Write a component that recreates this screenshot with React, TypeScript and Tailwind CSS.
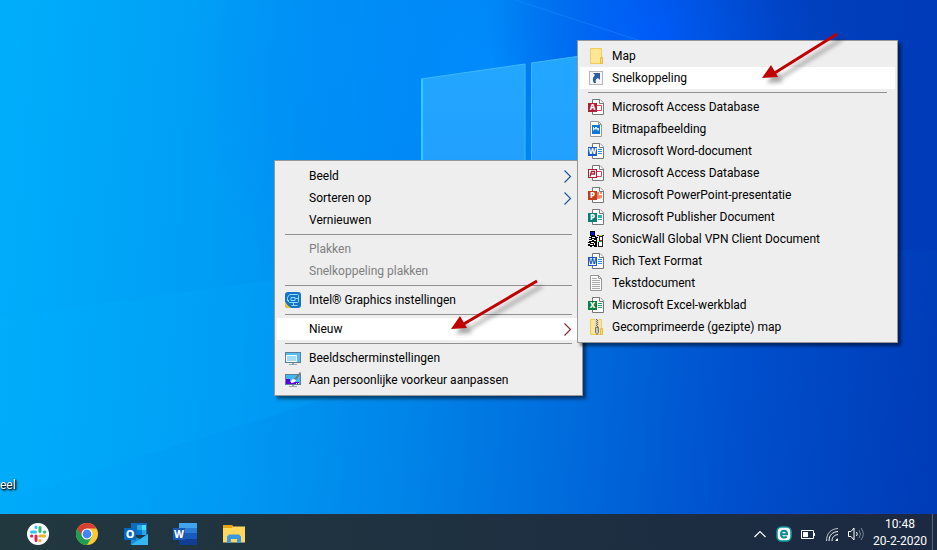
import React from "react";

interface MenuEntry {
  label: string;
  icon?: React.ReactNode;
  disabled?: boolean;
  active?: boolean;
  submenu?: boolean;
}

// Contour de page commun aux documents Office
const PageOutline = () => (
  <>
    <path d="M4.500 .5h7.500l3.500 3.500v11.500h-11z" fill="#fff" stroke="#777" />
    <path d="M11.500 .5v4h4" fill="#fff" stroke="#777" />
  </>
);

interface OfficeIconProps {
  letter?: string;
  color: string;
  outlined?: boolean;
  children?: React.ReactNode;
}

const OfficeIcon = ({ letter, color, outlined, children }: OfficeIconProps) => (
  <svg width="16" height="16" viewBox="0 0 16 16" aria-hidden="true">
    <PageOutline />
    {children}
    {outlined ? (
      <rect x="0.5" y="4.5" width="8" height="8" fill="#fff" stroke={color} />
    ) : (
      <rect x="0" y="4" width="9" height="9" fill={color} />
    )}
    {letter ? (
      <text
        x="4.5"
        y="11.300"
        textAnchor="middle"
        fontSize="8"
        fontWeight="800"
        fontFamily="Noto Sans, sans-serif"
        fill={outlined ? color : "#fff"}
      >
        {letter}
      </text>
    ) : (
      <path d="M2 11.500l1.500-5h3v2.500h-3" fill="none" stroke={color} strokeWidth="1.300" />
    )}
  </svg>
);

const DocLines = ({ color }: { color: string }) => (
  <path d="M10 6.500h4M10 8.500h4M10 10.500h4" stroke={color} fill="none" />
);

const FolderIcon = ({ zipped }: { zipped?: boolean }) => (
  <svg width="16" height="16" viewBox="0 0 16 16" aria-hidden="true">
    <path d="M2.500 .5h11v9h1v6h-12z" fill="#ffe695" stroke="#f0cd58" />
    <path d="M12.500 9.500h2v6h-2z" fill="#fbd86c" stroke="#e5bd45" />
    {zipped && (
      <>
        <path d="M7 0h4v10h-4z" fill="#d8d8d0" />
        <path d="M8.500 0v10" stroke="#666" strokeDasharray="1 1" />
        <path d="M9.500 1v10" stroke="#666" strokeDasharray="1 1" />
        <path d="M7.500 8.500h3v5l-1.500 2l-1.500-2z" fill="#c4c4c4" stroke="#777" />
      </>
    )}
  </svg>
);

const ShortcutIcon = () => (
  <svg width="16" height="16" viewBox="0 0 16 16" aria-hidden="true">
    <rect x="1.500" y="1.500" width="13" height="13" fill="#f7f7f7" stroke="#b5b5b5" />
    <path d="M5 3h7v7l-2-2c-2 1-3 2-2 5h-2c-2-3-1-6 1-8z" fill="#2c5d9e" />
  </svg>
);

const BitmapIcon = () => (
  <svg width="16" height="16" viewBox="0 0 16 16" aria-hidden="true">
    <path d="M2.500 .5h8l3 3v12h-11z" fill="#fff" stroke="#999" />
    <path d="M10.500 .5v3h3" fill="none" stroke="#999" />
    <rect x="4" y="4" width="8" height="9" fill="#0b78d8" />
    <path d="M5 6h6v3l-1 1l-1-2l-1 1l-1-1l-2 2z" fill="#d9eefc" />
    <path d="M6 6h1v1h-1zM9 6h2v1h-2z" fill="#0b78d8" />
  </svg>
);

const TextIcon = () => (
  <svg width="16" height="16" viewBox="0 0 16 16" aria-hidden="true">
    <path d="M2.500 .5h8l3 3v12h-11z" fill="#fafafa" stroke="#999" />
    <path d="M10.500 .5v3h3" fill="none" stroke="#999" />
    <path d="M4 3.500h5M4 5.500h8M4 7.500h8M4 9.500h8M4 11.500h8M4 13.500h8" stroke="#aaa" />
  </svg>
);

const SonicWallIcon = () => (
  <svg width="16" height="16" viewBox="0 0 16 16" shapeRendering="crispEdges" aria-hidden="true">
    <path d="M2 0h5v5h1v1h2v1h-1v9h-9v-5h1v-6h1z" fill="#000" />
    <path d="M3 1h3v3h-3z" fill="#0018e8" />
    <path d="M1 5h2v1h-2zM4 6h3v1h-3zM1 7h2v1h-2zM4 8h2v1h-2zM6 9h2v1h-2zM1 9h3v1h-3zM3 11h3v1h-3zM0 12h2v1h-2zM6 12h1v2h-1zM2 13h3v1h-3zM0 15h2v1h-2zM4 15h2v1h-2z" fill="#fff" />
    <path d="M9 4h7v1h-1v11h-5v-5h1v-6h-2z" fill="#222" />
    <path d="M12 6h2v3h-2zM11 11h3v4h-3z" fill="#fff" />
    <path d="M11 4h3v1h-3z" fill="#e8e000" />
    <path d="M11 10h3v1h-3z" fill="#00b030" />
    <path d="M12 9h2v1h-2z" fill="#e01010" />
  </svg>
);

const IntelIcon = () => (
  <svg width="16" height="16" viewBox="0 0 16 16" aria-hidden="true">
    <rect x="0" y="0" width="16" height="16" rx="3" fill="#1672c6" />
    <path d="M0 9.500q3 5 6.500 6.500h-3.500q-3 0-3-3z" fill="#f6c52c" />
    <path d="M4.500 2.500h8q1 0 1 1v6q0 1-1 1h-8l-2-2v-3zM6.500 13.500h6M6 5.500h4v3h-4zM2 8.500h2M10 6.500h3M8.500 11v2" fill="none" stroke="#8cdcff" />
  </svg>
);

const MonitorIcon = () => (
  <svg width="16" height="16" viewBox="0 0 16 16" aria-hidden="true">
    <rect x="0.500" y="2.500" width="15" height="10" fill="#53bdf4" stroke="#5c7f97" />
    <path d="M1.500 5.500h10v6h-10z" fill="#a6dcfb" stroke="#fff" />
    <path d="M7 13h2v1h3v1h-8v-1h3z" fill="#9aa7b0" />
  </svg>
);

const PersonalizeIcon = () => (
  <svg width="16" height="16" viewBox="0 0 16 16" aria-hidden="true">
    <rect x="0.500" y="2.500" width="15" height="10" fill="#45b6f5" stroke="#5c7f97" />
    <path d="M1 7h4v3h9v2h-13z" fill="#5a00e0" />
    <path d="M11 11h1v1h-1zM13 11h1v1h-1z" fill="#fff" />
    <path d="M6 11q0-4 3-4l2 1q-1 3-5 3z" fill="#fff" />
    <path d="M9 7l6-7l1 1l-5 7z" fill="#767676" />
    <path d="M7 13h2v1h3v1h-8v-1h3z" fill="#9aa7b0" />
  </svg>
);

const contextGroups: MenuEntry[][] = [
  [
    { label: "Beeld", submenu: true },
    { label: "Sorteren op", submenu: true },
    { label: "Vernieuwen" },
  ],
  [
    { label: "Plakken", disabled: true },
    { label: "Snelkoppeling plakken", disabled: true },
  ],
  [{ label: "Intel® Graphics instellingen", icon: <IntelIcon /> }],
  [{ label: "Nieuw", submenu: true, active: true }],
  [
    { label: "Beeldscherminstellingen", icon: <MonitorIcon /> },
    { label: "Aan persoonlijke voorkeur aanpassen", icon: <PersonalizeIcon /> },
  ],
];

const newGroups: MenuEntry[][] = [
  [
    { label: "Map", icon: <FolderIcon /> },
    { label: "Snelkoppeling", icon: <ShortcutIcon />, active: true },
  ],
  [
    {
      label: "Microsoft Access Database",
      icon: (
        <OfficeIcon letter="A" color="#b01f36">
          <path d="M9 6.500h4.500v5h-4.500" fill="none" stroke="#d8455a" />
        </OfficeIcon>
      ),
    },
    { label: "Bitmapafbeelding", icon: <BitmapIcon /> },
    {
      label: "Microsoft Word-document",
      icon: (
        <OfficeIcon letter="W" color="#185abd">
          <DocLines color="#2f8be0" />
        </OfficeIcon>
      ),
    },
    {
      label: "Microsoft Access Database",
      icon: (
        <OfficeIcon color="#b01f36" outlined>
          <path d="M9 6.500h4.500v5h-4.500" fill="none" stroke="#d8455a" />
        </OfficeIcon>
      ),
    },
    {
      label: "Microsoft PowerPoint-presentatie",
      icon: (
        <OfficeIcon letter="P" color="#c43e1c">
          <path d="M9 5h2v3h3v3q-2 1-5 1z" fill="#f58a68" />
          <path d="M12 5h2v2h-2z" fill="#f58a68" />
        </OfficeIcon>
      ),
    },
    {
      label: "Microsoft Publisher Document",
      icon: (
        <OfficeIcon letter="P" color="#0a7c78">
          <path d="M10 10.500h4" stroke="#2cb5b0" />
          <path d="M10 6h4v3h-4z" fill="#2cb5b0" />
        </OfficeIcon>
      ),
    },
    { label: "SonicWall Global VPN Client Document", icon: <SonicWallIcon /> },
    {
      label: "Rich Text Format",
      icon: (
        <OfficeIcon letter="W" color="#185abd" outlined>
          <DocLines color="#2f8be0" />
        </OfficeIcon>
      ),
    },
    { label: "Tekstdocument", icon: <TextIcon /> },
    {
      label: "Microsoft Excel-werkblad",
      icon: (
        <OfficeIcon letter="X" color="#107c41">
          <DocLines color="#21a366" />
        </OfficeIcon>
      ),
    },
    { label: "Gecomprimeerde (gezipte) map", icon: <FolderIcon zipped /> },
  ],
];

const MenuItem = ({ label, icon, disabled, active, submenu }: MenuEntry) => (
  <button
    type="button"
    role="menuitem"
    disabled={disabled}
    className={`flex h-[22px] w-full items-center gap-2 px-2 text-left text-black disabled:text-[#808080] ${
      active ? "bg-white" : ""
    }`}
  >
    <span className="h-4 w-4 shrink-0">{icon}</span>
    <span className="flex-1 whitespace-nowrap">{label}</span>
    {submenu && (
      <svg width="9" height="13" viewBox="0 0 9 13" aria-hidden="true">
        <path d="M1.500 .5l6 6l-6 6" fill="none" strokeWidth="1.200" stroke={active ? "#8c2a3a" : "#1b5a9c"} />
      </svg>
    )}
  </button>
);

const Menu = ({ groups, name, className }: { groups: MenuEntry[][]; name: string; className: string }) => (
  <div
    role="menu"
    aria-label={name}
    className={`absolute border border-[#979797] bg-[#eeeeee] px-0.5 py-1 shadow-[3px_3px_3px_rgba(0,0,0,0.5)] ${className}`}
  >
    {groups.map((group, index) => (
      <React.Fragment key={index}>
        {index > 0 && <hr className="mx-2 my-[3px] border-[#919191]" />}
        {group.map((entry, i) => (
          <MenuItem key={i} {...entry} />
        ))}
      </React.Fragment>
    ))}
  </div>
);

// Flèche rouge d'annotation, la pointe en bas à gauche
const RedArrow = ({ shaft, className }: { shaft: string; className: string }) => (
  <svg
    width="104"
    height="68"
    viewBox="0 0 104 68"
    className={`pointer-events-none absolute overflow-visible ${className}`}
    aria-hidden="true"
  >
    <g className="drop-shadow-[5px_5px_2px_rgba(0,0,0,0.35)]">
      <path d={shaft} stroke="#c00000" strokeWidth="3" fill="none" />
      <path d="M0 49l9-13l7 12z" fill="#c00000" />
    </g>
  </svg>
);

const Wallpaper = () => (
  <svg
    className="absolute inset-0 h-full w-full"
    viewBox="0 0 937 550"
    preserveAspectRatio="none"
    aria-hidden="true"
  >
    <defs>
      <linearGradient id="sky" gradientUnits="userSpaceOnUse" x1="0" y1="250" x2="937" y2="330">
        <stop offset="0" stopColor="#00adfb" />
        <stop offset="0.250" stopColor="#009bf4" />
        <stop offset="0.450" stopColor="#0084e8" />
        <stop offset="0.620" stopColor="#006bdc" />
        <stop offset="0.800" stopColor="#004fcc" />
        <stop offset="1" stopColor="#003cb8" />
      </linearGradient>
      <radialGradient id="glow" gradientUnits="userSpaceOnUse" cx="490" cy="70" r="300">
        <stop offset="0" stopColor="#008cff" stopOpacity="0.9" />
        <stop offset="0.500" stopColor="#008cff" stopOpacity="0.500" />
        <stop offset="1" stopColor="#0080ff" stopOpacity="0" />
      </radialGradient>
      <radialGradient id="halo" gradientUnits="userSpaceOnUse" cx="660" cy="30" r="170">
        <stop offset="0" stopColor="#005cff" stopOpacity="0.9" />
        <stop offset="0.400" stopColor="#0054f4" stopOpacity="0.600" />
        <stop offset="1" stopColor="#0048d8" stopOpacity="0" />
      </radialGradient>
      <linearGradient id="corner" gradientUnits="userSpaceOnUse" x1="640" y1="60" x2="830" y2="0">
        <stop offset="0" stopColor="#003cc4" stopOpacity="0" />
        <stop offset="1" stopColor="#003ab8" stopOpacity="0.7" />
      </linearGradient>
      <linearGradient id="pane" x1="0" y1="0" x2="0" y2="1">
        <stop offset="0" stopColor="#22a8ff" />
        <stop offset="1" stopColor="#229aff" />
      </linearGradient>
    </defs>
    <rect width="937" height="550" fill="url(#sky)" />
    <rect width="937" height="550" fill="url(#glow)" />
    <rect width="937" height="550" fill="url(#halo)" />
    <path d="M515 0h422v250h-100l-190-208z" fill="url(#corner)" />
    <path d="M0 317l421-57v110l-421 130z" fill="#00b8ff" opacity="0.150" />
    <path d="M515 0l135 44" stroke="#1c8cff" opacity="0.500" />
    <path d="M421 79l104-15v180h-104zM531 63l140-20v200h-140z" fill="url(#pane)" />
    <path d="M422 79v165" stroke="#35ccff" strokeWidth="2" />
    <path d="M421 79l104-15v180M531.500 244v-181l140-20" fill="none" stroke="#3fb8ff" />
  </svg>
);

const taskbarApps = [
  {
    name: "Slack",
    icon: (
      <svg width="24" height="24" viewBox="0 0 24 24" aria-hidden="true">
        <circle cx="12" cy="12" r="11" fill="#fff" />
        <g strokeWidth="3" strokeLinecap="round">
          <path d="M5.500 10h4M10 5v.5" stroke="#36c5f0" />
          <path d="M14 5.500v4M18.500 10h.3" stroke="#2eb67d" />
          <path d="M14 14h4.500M14 18.500v.3" stroke="#ecb22e" />
          <path d="M10 14v4.500M5.500 14h.3" stroke="#e01e5a" />
        </g>
      </svg>
    ),
  },
  {
    name: "Google Chrome",
    icon: (
      <svg width="24" height="24" viewBox="0 0 24 24" aria-hidden="true">
        <circle cx="12" cy="12" r="11" fill="#fcc934" />
        <path d="M12 12l-9.530-5.500a11 11 0 0 0 9.530 16.500l5-8.500z" fill="#1e9e52" />
        <path d="M2.470 6.500a11 11 0 0 1 19.060 0h-9.530v5.500l-5 2z" fill="#d93f31" />
        <circle cx="12" cy="12" r="5.500" fill="#fff" />
        <circle cx="12" cy="12" r="4.400" fill="#4285f4" />
      </svg>
    ),
  },
  {
    name: "Outlook",
    icon: (
      <svg width="24" height="24" viewBox="0 0 24 24" aria-hidden="true">
        <path d="M7 1h16v12h-16z" fill="#0f6cbd" />
        <path d="M13 3h5v5h-5z" fill="#28a8ea" />
        <path d="M18 3h4v5h-4z" fill="#50d9ff" />
        <path d="M13 8h5v5h-5z" fill="#0078d4" />
        <path d="M18 8h4v5h-4z" fill="#28a8ea" />
        <path d="M7 13l9 4l8-5v11h-17z" fill="#1490df" />
        <path d="M7 23l17-11v11z" fill="#35b8f1" />
        <rect x="0" y="6" width="12" height="12" fill="#0068c0" />
        <text x="6" y="16" textAnchor="middle" fontSize="11" fontWeight="800" fontFamily="Noto Sans, sans-serif" fill="#fff">O</text>
      </svg>
    ),
  },
  {
    name: "Word",
    icon: (
      <svg width="24" height="24" viewBox="0 0 24 24" aria-hidden="true">
        <path d="M6 1h18v6h-18z" fill="#41a5ee" />
        <path d="M6 6h18v6h-18z" fill="#2b7cd3" />
        <path d="M6 11h18v6h-18z" fill="#185abd" />
        <path d="M6 17h18v6h-18z" fill="#103f91" />
        <rect x="0" y="6" width="12" height="12" fill="#1a56b4" />
        <text x="6" y="16" textAnchor="middle" fontSize="10" fontWeight="800" fontFamily="Noto Sans, sans-serif" fill="#fff">W</text>
      </svg>
    ),
  },
  {
    name: "Verkenner",
    icon: (
      <svg width="24" height="24" viewBox="0 0 24 24" aria-hidden="true">
        <path d="M1 3h9l1 1.500h12v16h-22z" fill="#ffd75e" />
        <path d="M1 3h9l1 1.500l-1.500 1.500h-8.500z" fill="#e8a30c" />
        <path d="M5 21v-6.500l2-2h10l2 2v6.500h-4v-4h-6v4z" fill="#3b97e0" />
      </svg>
    ),
  },
];

const trayItems = [
  {
    name: "Verborgen pictogrammen weergeven",
    icon: <path d="M2.500 11l5.500-5.500l5.500 5.500" fill="none" stroke="#fff" strokeWidth="1.200" />,
  },
  {
    name: "ESET",
    icon: (
      <>
        <rect x="1" y="1" width="14" height="14" rx="4.500" fill="#fff" stroke="#14959c" strokeWidth="1.500" />
        <path d="M5 8.200h6q0-3.400-3-3.400t-3 3.400q0 3.200 3 3.200q1.800 0 2.800-.8" fill="none" stroke="#0e8a92" strokeWidth="2" />
      </>
    ),
  },
  {
    name: "Batterij",
    icon: (
      <>
        <path d="M1.500 4.500h12v8h-12z" fill="none" stroke="#fff" />
        <path d="M3 6h5v5h-5zM14 7h1v3h-1z" fill="#fff" />
      </>
    ),
  },
  {
    name: "Netwerk",
    icon: (
      <>
        <path d="M5 15c0-6 3.500-9 9-9.500M8 15c0-4 2.500-6 6-6.500" fill="none" stroke="#fff" />
        <path d="M11.500 15c0-1.500 1-2.500 2.500-2.500v2.500z" fill="#fff" />
        <path d="M2.500 15c0-8 4.500-12 11.500-12.500" fill="none" stroke="#c3c9d0" />
      </>
    ),
  },
  {
    name: "Volume",
    icon: (
      <>
        <path d="M.5 5.500h2.500l3-3.500v12l-3-3.500h-2.500z" fill="none" stroke="#fff" />
        <path d="M8.500 6q1.500 2 0 4" fill="none" stroke="#fff" />
        <path d="M11 4q3 4 0 8M13 2q4.500 6 0 12" fill="none" stroke="#7d8794" />
      </>
    ),
  },
];

const Taskbar = () => (
  <footer className="relative flex h-9 shrink-0 justify-between overflow-hidden bg-linear-to-r from-[#22383f] to-[#1b2942] pl-[14px] pr-1">
    <nav aria-label="Apps" className="flex gap-px pt-1">
      {taskbarApps.map((app) => (
        <button key={app.name} type="button" aria-label={app.name} className="flex h-8 w-12 items-center justify-center">
          {app.icon}
        </button>
      ))}
    </nav>
    <div className="flex">
      <div className="flex pt-1">
        {trayItems.map((item) => (
          <button key={item.name} type="button" aria-label={item.name} className="flex h-8 w-6 items-center justify-center">
            <svg width="16" height="16" viewBox="0 0 16 16" aria-hidden="true">
              {item.icon}
            </svg>
          </button>
        ))}
      </div>
      <button type="button" className="flex w-16 flex-col items-center pt-0.5 leading-[17px] text-white">
        <time>10:48</time>
        <time>20-2-2020</time>
      </button>
      <div className="w-px bg-[#5b6675]" />
    </div>
  </footer>
);

export default function App() {
  return (
    <div className="relative flex h-screen flex-col overflow-hidden bg-[#0078e6] font-['Roboto','Open_Sans',sans-serif] text-xs">
      <Wallpaper />
      <main className="relative flex-1">
        <span className="absolute left-0 top-[477px] leading-4 text-white [text-shadow:1px_1px_2px_#000,1px_1px_2px_#000]">
          eel
        </span>
        <Menu name="Bureaublad" groups={contextGroups} className="left-[274px] top-[160px] w-[309px]" />
        <Menu name="Nieuw" groups={newGroups} className="left-[577px] top-[40px] w-[321px]" />
        <RedArrow shaft="M86 1l-75 44" className="left-[451px] top-[280px]" />
        <RedArrow shaft="M75 5l-64 40" className="left-[762px] top-[29px]" />
      </main>
      <Taskbar />
    </div>
  );
}
